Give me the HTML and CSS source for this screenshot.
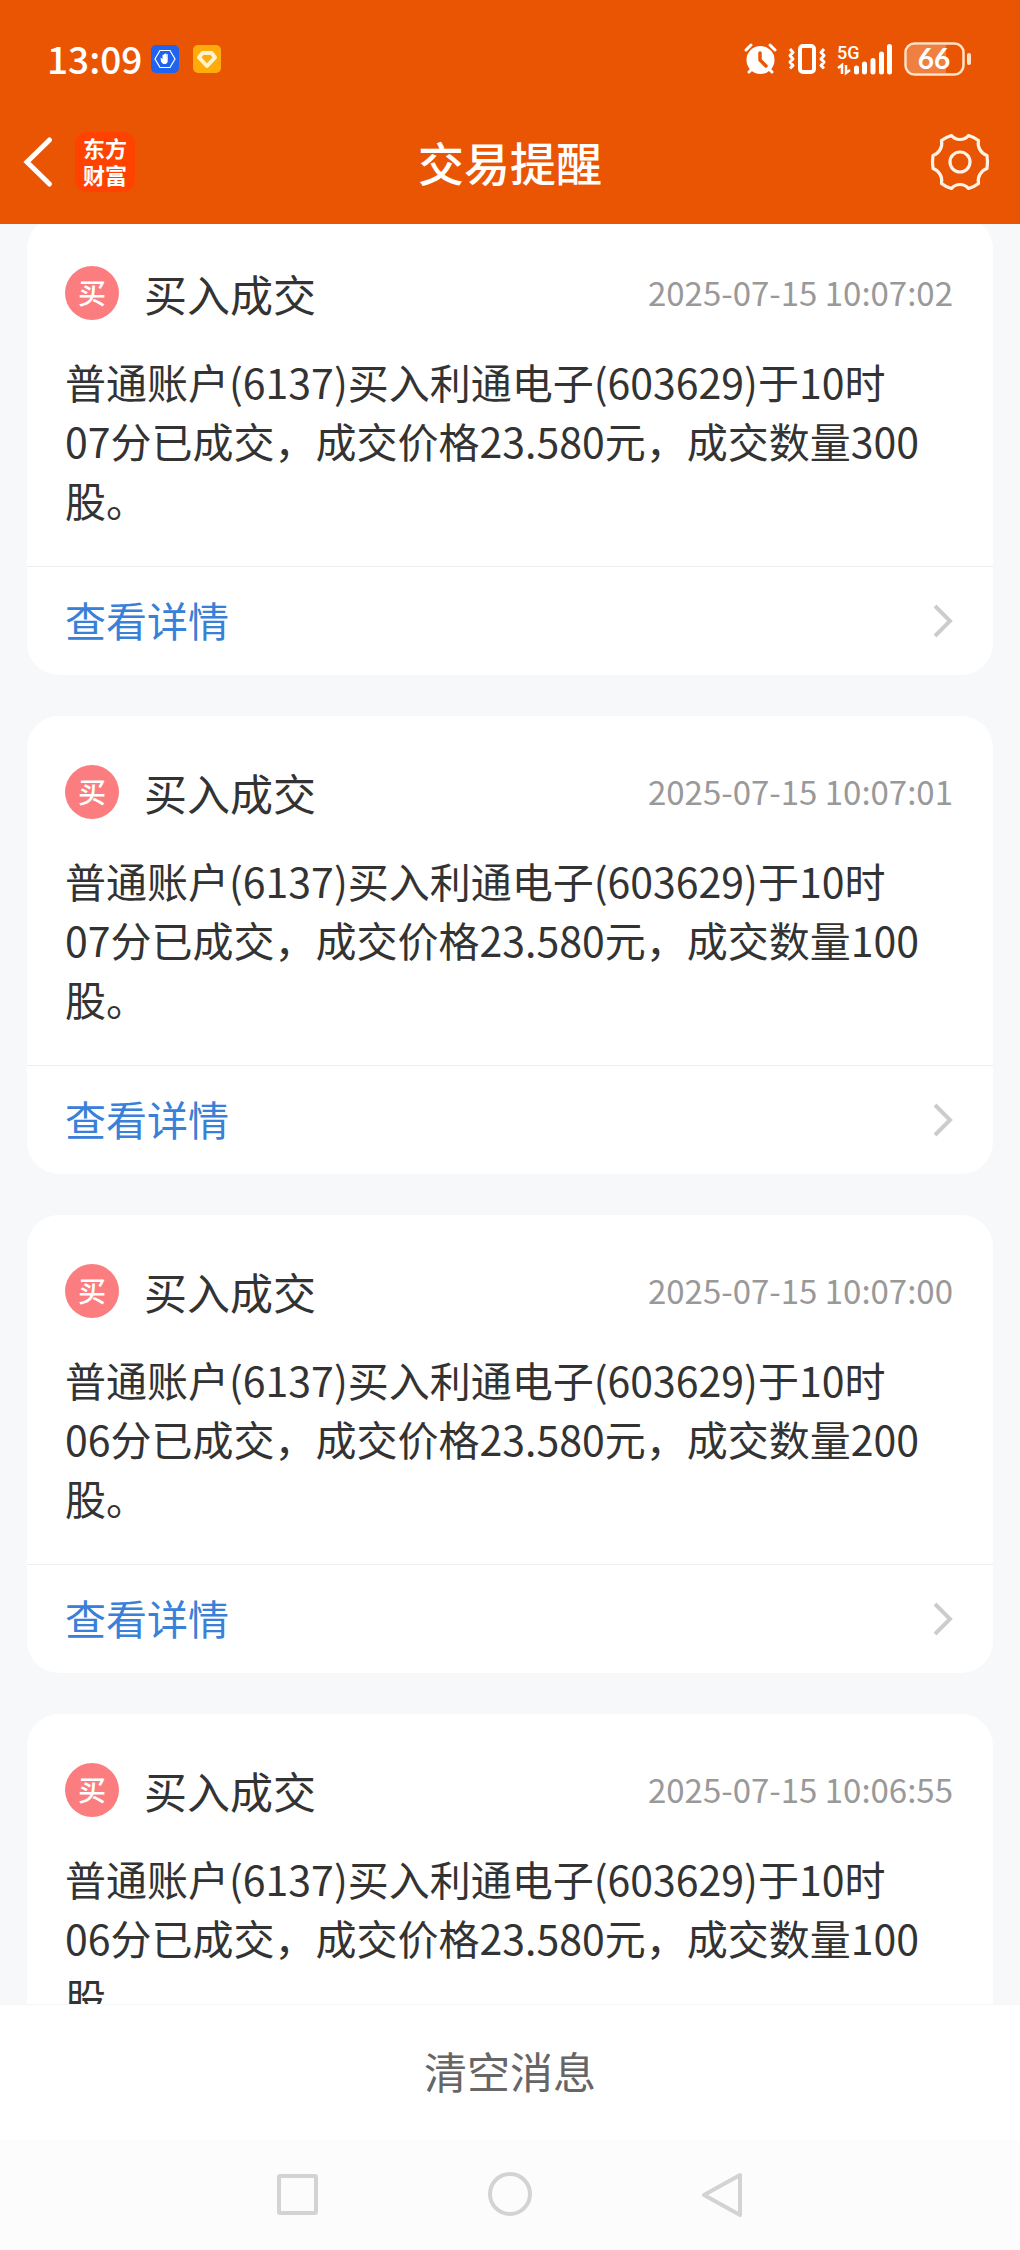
FILE: index.html
```html
<!DOCTYPE html>
<html lang="zh-CN">
<head>
  <meta charset="UTF-8" />
  <meta name="viewport" content="width=device-width, initial-scale=1" />
  <title>交易提醒</title>
  <link rel="stylesheet" href="styles.css">
</head>
<body>
  <header class="header">
    <div class="status-bar">
      <span class="clock">13:09</span>
      <svg class="app-badge" width="28" height="28" viewBox="0 0 28 28">
        <rect width="28" height="28" rx="5" fill="#1f63ee" />
        <path d="M9 5.500h10l5 8.500-5 8.500H9L4 14z" fill="none" stroke="#fff" stroke-width="1.200" />
        <path d="M9.500 12.500l2 1.500V10h1.200v3.500V9H14v4.500V8.500h1.200v5l.3-4.500h1.200v8l-1.700 2h-3l-2-2.500z" fill="#fff" />
      </svg>
      <svg class="app-badge second" width="28" height="28" viewBox="0 0 28 28">
        <rect width="28" height="28" rx="5" fill="#ffab0a" />
        <path d="M9.500 8h9l3.500 4.500-8 8.500-8-8.500z" fill="none" stroke="#fff3cf" stroke-width="4" stroke-linejoin="round" />
      </svg>

      <div class="status-icons">
        <svg width="33" height="32" viewBox="0 0 33 32">
          <g stroke="#fff" stroke-width="3" stroke-linecap="round">
            <path d="M2 7l5-5M31 7l-5-5M5 29l4-4M28 29l-4-4" />
          </g>
          <circle cx="16.500" cy="17" r="14" fill="#fff" />
          <path d="M16 10v7l6 6" fill="none" stroke="#ea5504" stroke-width="3.500" stroke-linecap="round" stroke-linejoin="round" />
        </svg>
        <svg width="38" height="32" viewBox="0 0 38 32">
          <rect x="12" y="3" width="14" height="26" rx="3" fill="none" stroke="#fff" stroke-width="4" />
          <path d="M2 6l3 3.500-3 3 3 3.500-3 3 3 3.500-3 3M36 6l-3 3.500 3 3-3 3.500 3 3-3 3.500 3 3" fill="none" stroke="#fff" stroke-width="3" stroke-linejoin="round" />
        </svg>
        <svg width="56" height="32" viewBox="0 0 56 32">
          <text class="network" x="0" y="16">5G</text>
          <path d="M1 25l4-3v9M9 22v8l4-3" fill="none" stroke="#fff" stroke-width="2.500" />
          <path d="M19.500 25v4M27.500 21v8M36 17.500v11.500M44.500 11v18M52.500 3.500v25.500" stroke="#fff" stroke-width="5" stroke-linecap="round" />
        </svg>
        <svg width="68" height="34" viewBox="0 0 68 34">
          <path d="M10 3h32v28H10a7 7 0 0 1-7-7V10a7 7 0 0 1 7-7z" fill="#f0803f" />
          <rect x="1.500" y="1.500" width="58" height="31" rx="9" fill="none" stroke="#ffe3cb" stroke-width="2.500" />
          <path d="M65 13v8" stroke="#ffe3cb" stroke-width="4" stroke-linecap="round" />
          <text class="battery" x="30" y="27">66</text>
        </svg>
      </div>
    </div>

    <div class="title-bar">
      <div class="title-left">
        <button class="icon-button" aria-label="返回">
          <svg width="30" height="50" viewBox="0 0 30 50">
            <path d="M26.500 3L4 25l22.500 22" fill="none" stroke="#fff" stroke-width="5" stroke-linecap="round" />
          </svg>
        </button>
        <div class="logo">东方<br>财富</div>
      </div>
      <h1>交易提醒</h1>
      <button class="icon-button settings" aria-label="设置">
        <svg width="58" height="58" viewBox="-29 -29 58 58">
          <g fill="none" stroke="#fff3e6" stroke-width="3.200" stroke-linejoin="round">
            <path d="M27 -6.500Q28 0 27 6.500A13 13 0 0 0 18.500 21.500Q14 25 8.500 26.500A11 11 0 0 0 -8.500 26.500Q-14 25 -18.500 21.500A13 13 0 0 0 -27 6.500Q-28 0 -27 -6.500A13 13 0 0 0 -18.500 -21.500Q-14 -25 -8.500 -26.500A11 11 0 0 0 8.500 -26.500Q14 -25 18.500 -21.500A13 13 0 0 0 27 -6.500z" />
            <circle r="10" />
          </g>
        </svg>
      </button>
    </div>
  </header>

  <main class="list">
    <article class="card">
      <div class="card-head">
        <span class="tag">买</span>
        <h2>买入成交</h2>
        <time>2025-07-15 10:07:02</time>
      </div>
      <p>普通账户(6137)买入利通电子(603629)于10时07分已成交，成交价格23.580元，成交数量300股。</p>
      <a class="detail" href="#">
        <span>查看详情</span>
        <svg width="20" height="34" viewBox="0 0 20 34"><path d="M2 2l15 15L2 32" /></svg>
      </a>
    </article>

    <article class="card">
      <div class="card-head">
        <span class="tag">买</span>
        <h2>买入成交</h2>
        <time>2025-07-15 10:07:01</time>
      </div>
      <p>普通账户(6137)买入利通电子(603629)于10时07分已成交，成交价格23.580元，成交数量100股。</p>
      <a class="detail" href="#">
        <span>查看详情</span>
        <svg width="20" height="34" viewBox="0 0 20 34"><path d="M2 2l15 15L2 32" /></svg>
      </a>
    </article>

    <article class="card">
      <div class="card-head">
        <span class="tag">买</span>
        <h2>买入成交</h2>
        <time>2025-07-15 10:07:00</time>
      </div>
      <p>普通账户(6137)买入利通电子(603629)于10时06分已成交，成交价格23.580元，成交数量200股。</p>
      <a class="detail" href="#">
        <span>查看详情</span>
        <svg width="20" height="34" viewBox="0 0 20 34"><path d="M2 2l15 15L2 32" /></svg>
      </a>
    </article>

    <article class="card">
      <div class="card-head">
        <span class="tag">买</span>
        <h2>买入成交</h2>
        <time>2025-07-15 10:06:55</time>
      </div>
      <p>普通账户(6137)买入利通电子(603629)于10时06分已成交，成交价格23.580元，成交数量100股。</p>
      <a class="detail" href="#">
        <span>查看详情</span>
        <svg width="20" height="34" viewBox="0 0 20 34"><path d="M2 2l15 15L2 32" /></svg>
      </a>
    </article>
  </main>

  <button class="clear">清空消息</button>

  <nav class="system-nav">
    <button class="icon-button" aria-label="最近任务">
      <svg width="46" height="46" viewBox="0 0 46 46"><rect x="4" y="4" width="37" height="37" rx="1" /></svg>
    </button>
    <button class="icon-button" aria-label="主页">
      <svg width="46" height="46" viewBox="0 0 46 46"><circle cx="23" cy="22" r="20" /></svg>
    </button>
    <button class="icon-button" aria-label="后退">
      <svg width="46" height="46" viewBox="0 0 46 46"><path d="M41 3v40L5 23z" /></svg>
    </button>
  </nav>
</body>
</html>
```

FILE: styles.css
```css
* {
  box-sizing: border-box;
}

body {
  margin: 0;
  height: 100vh;
  display: flex;
  flex-direction: column;
  font-family: "Noto Sans CJK SC", sans-serif;
  background: #f6f8fa;
  color: #333;
}

h1,
h2,
p {
  margin: 0;
  font-weight: 400;
}

button {
  font-family: inherit;
  border: none;
  cursor: pointer;
}

svg {
  display: block;
  flex: none;
  overflow: visible;
}

.icon-button {
  padding: 0;
  background: none;
}

/* header */
.header {
  position: relative;
  z-index: 1;
  flex: none;
  background: #ea5504;
  color: #fff;
}

.status-bar {
  display: flex;
  align-items: center;
  height: 100px;
  padding: 18px 48px 0 47px;
}

.clock {
  padding-bottom: 2px;
  font-size: 37px;
  line-height: 40px;
  font-weight: 500;
}

.app-badge {
  margin-left: 9px;
}

.app-badge.second {
  margin-left: 14px;
}

.status-icons {
  display: flex;
  align-items: center;
  gap: 11px;
  margin-left: auto;
}

.network {
  font: 500 18px Roboto, sans-serif;
  fill: #fff;
}

.battery {
  font: 700 28px Lato, sans-serif;
  fill: #fff;
  text-anchor: middle;
}

.title-bar {
  display: grid;
  grid-template-columns: 1fr auto 1fr;
  align-items: center;
  height: 124px;
  padding: 0 23px;
}

.title-left {
  display: flex;
  align-items: center;
  gap: 22px;
}

.logo {
  width: 60px;
  height: 60px;
  padding-top: 2px;
  border-radius: 12px;
  background: #ff4200;
  font-size: 22px;
  line-height: 27px;
  font-weight: 700;
  text-align: center;
}

.title-bar h1 {
  padding-bottom: 3px;
  font-size: 46px;
  line-height: 60px;
  font-weight: 500;
}

.settings {
  justify-self: end;
  margin-right: 8px;
}

/* messages, scrolled a little way under the header */
.list {
  flex: 1;
  min-height: 0;
  margin-top: -7px;
  padding: 0 27px;
  overflow: hidden;
}

.card {
  margin-bottom: 41px;
  background: #fff;
  border-radius: 32px;
}

.card-head {
  display: flex;
  align-items: center;
  height: 135px;
  padding: 16px 40px 0 38px;
}

.tag {
  width: 54px;
  height: 54px;
  margin-right: 25px;
  border-radius: 50%;
  background: #fb7d7f;
  color: #fff;
  font-size: 28px;
  line-height: 52px;
  font-weight: 500;
  text-align: center;
}

.card h2 {
  font-size: 43px;
  line-height: 60px;
}

.card time {
  margin-left: auto;
  padding-bottom: 2px;
  color: #999;
  font-size: 33px;
  line-height: 48px;
}

.card p {
  padding: 0 66px 37px 38px;
  font-size: 41px;
  line-height: 59px;
}

.detail {
  display: flex;
  align-items: center;
  justify-content: space-between;
  height: 109px;
  padding: 0 40px 0 38px;
  border-top: 1px solid #ededed;
  color: #3880d8;
  font-size: 41px;
  text-decoration: none;
}

.detail span {
  padding-bottom: 4px;
}

.detail path {
  fill: none;
  stroke: #ccc;
  stroke-width: 4;
}

/* bottom */
.clear {
  flex: none;
  height: 136px;
  padding-bottom: 6px;
  border-top: 1px solid #f6f7f9;
  background: #fff;
  color: #666;
  font-size: 43px;
}

.system-nav {
  flex: none;
  display: flex;
  align-items: center;
  justify-content: center;
  gap: 166px;
  height: 110px;
  background: #fcfcfc;
}

.system-nav svg {
  fill: none;
  stroke: #d3d3d3;
  stroke-width: 4;
  stroke-linejoin: round;
}
```
